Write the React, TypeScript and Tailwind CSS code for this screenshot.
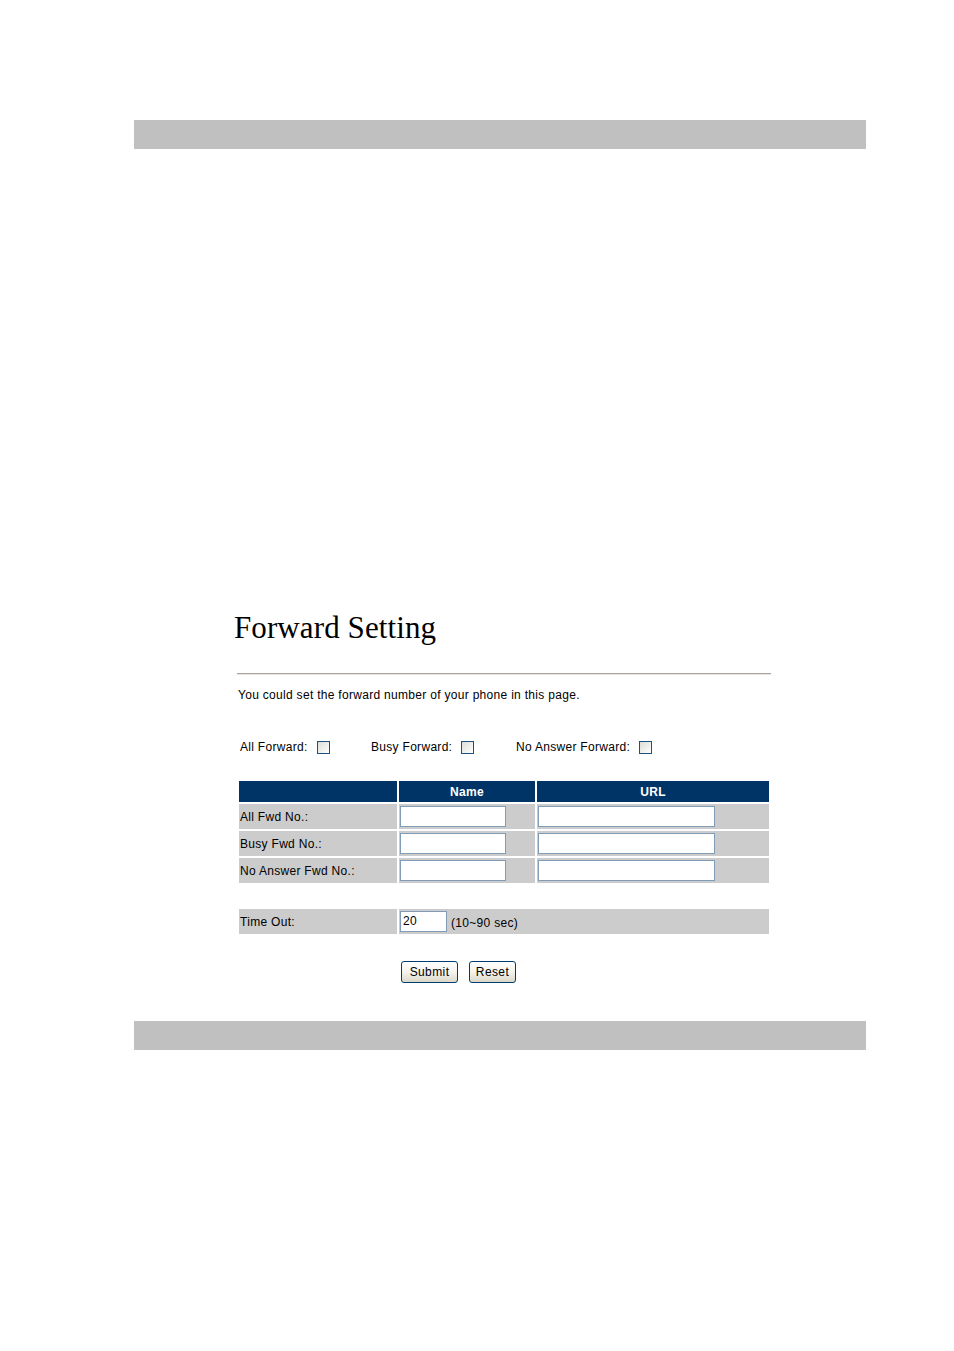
import React from 'react';

const sans = "font-['Liberation_Sans',Arial,sans-serif]";

const Checkbox = () => (
  <span className="inline-block w-[13px] h-[13px] border border-[#1c5180] bg-gradient-to-br from-[#dcdcd7] to-[#ffffff]" />
);

const TextBox = ({ width, value = '' }: { width: string; value?: string }) => (
  <div className={`${width} h-[21px] border border-[#7f9db9] bg-white text-[12px] leading-[19px] pl-[2px] text-black`}>
    {value}
  </div>
);

const XpButton = ({ label, width }: { label: string; width: string }) => (
  <div
    className={`${width} h-[22px] flex items-center justify-center rounded-[3px] border border-[#003c74] bg-gradient-to-b from-[#ffffff] via-[#f4f3ee] to-[#dcd8c8] text-[12px] tracking-[0.4px] text-black`}
  >
    {label}
  </div>
);

const rows = ['All Fwd No.:', 'Busy Fwd No.:', 'No Answer Fwd No.:'];

export default function App() {
  return (
    <div className={`min-h-[1351px] w-full bg-white pt-[120px] ${sans}`}>
      <div className="ml-[134px] w-[732px] h-[29px] bg-[#c0c0c0]" />

      <div className="ml-[234px] mt-[461px] h-[36px] leading-[36px] text-[31px] tracking-[0.1px] text-black font-['Liberation_Serif','Times_New_Roman',serif]">
        Forward Setting
      </div>

      <div className="ml-[237px] mt-[27px] w-[534px] h-[2px] border-t border-[#a8a49a] border-b border-b-[#e8e6e0]" />

      <div className="ml-[238px] mt-[12px] h-[16px] leading-[16px] text-[12px] tracking-[0.3px] text-black">
        You could set the forward number of your phone in this page.
      </div>

      <div className="ml-[240px] mt-[36px] h-[16px] flex items-center text-[12px] tracking-[0.3px] text-black">
        <div className="w-[131px] flex items-center gap-[9px]">
          <span>All Forward:</span>
          <Checkbox />
        </div>
        <div className="w-[145px] flex items-center gap-[9px]">
          <span>Busy Forward:</span>
          <Checkbox />
        </div>
        <div className="flex items-center gap-[9px]">
          <span>No Answer Forward:</span>
          <Checkbox />
        </div>
      </div>

      <div className="ml-[239px] mt-[26px] w-[530px] grid grid-cols-[158px_136px_232px] gap-[2px] text-[12px] tracking-[0.3px] text-black">
        <div className="h-[21px] bg-[#003366]" />
        <div className="h-[21px] bg-[#003366] text-white font-bold flex items-center justify-center">Name</div>
        <div className="h-[21px] bg-[#003366] text-white font-bold flex items-center justify-center">URL</div>
        {rows.map((r) => (
          <React.Fragment key={r}>
            <div className="h-[25px] bg-[#cccccc] flex items-center pl-[1px]">{r}</div>
            <div className="h-[25px] bg-[#cccccc] flex items-center pl-[1px]">
              <TextBox width="w-[106px]" />
            </div>
            <div className="h-[25px] bg-[#cccccc] flex items-center pl-[1px]">
              <TextBox width="w-[177px]" />
            </div>
          </React.Fragment>
        ))}
      </div>

      <div className="ml-[239px] mt-[26px] w-[530px] grid grid-cols-[158px_370px] gap-[2px] text-[12px] tracking-[0.3px] text-black">
        <div className="h-[25px] bg-[#cccccc] flex items-center pl-[1px]">Time Out:</div>
        <div className="h-[25px] bg-[#cccccc] flex items-center pl-[1px] gap-[4px]">
          <TextBox width="w-[47px]" value="20" />
          <span className="mt-[3px]">(10~90 sec)</span>
        </div>
      </div>

      <div className="ml-[401px] mt-[27px] flex gap-[11px]">
        <XpButton label="Submit" width="w-[57px]" />
        <XpButton label="Reset" width="w-[47px]" />
      </div>

      <div className="ml-[134px] mt-[38px] w-[732px] h-[29px] bg-[#c0c0c0]" />
    </div>
  );
}
